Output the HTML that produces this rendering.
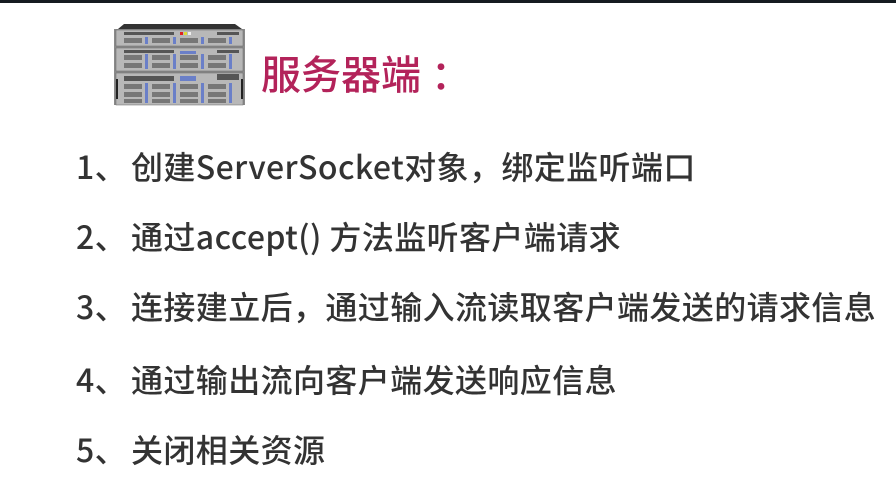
<!DOCTYPE html>
<html><head><meta charset="utf-8"><style>
body{margin:0;width:896px;height:490px;background:#fff;position:relative;overflow:hidden;font-family:"Liberation Sans","Noto Sans CJK SC",sans-serif}
.bar{position:absolute;left:0;top:0;width:896px;height:3px;background:#151b20}
.t{position:absolute;left:261px;top:46px;font-size:40px;color:#b3235a;font-family:"Noto Sans CJK SC",sans-serif;font-weight:500;line-height:52px;white-space:nowrap}
.l{position:absolute;left:76px;font-size:32px;color:#333;line-height:40px;white-space:nowrap;font-family:"Noto Sans CJK SC",sans-serif;font-weight:500;letter-spacing:0.4px}
.l span{display:inline-block;width:55px}
</style></head><body>
<div class="bar"></div>
<svg style="position:absolute;left:112px;top:24px" width="135" height="86" viewBox="0 0 135 86">
<polygon points="12,0 123,0 130,5 6,5" fill="#333"/>
<rect x="2" y="5" width="131" height="76" fill="#8a8a8a"/>
<g fill="#b8b8b8" stroke="#666" stroke-width="0.5">
<rect x="4" y="6" width="127" height="16"/><rect x="4" y="24" width="127" height="23"/><rect x="4" y="49" width="127" height="32"/></g>
<g fill="#555"><rect x="12" y="8" width="50" height="3"/><rect x="105" y="8" width="22" height="3"/>
<rect x="12" y="26" width="50" height="3"/><rect x="105" y="26" width="22" height="3"/>
<rect x="12" y="52" width="50" height="5"/><rect x="105" y="50" width="22" height="6"/></g>
<g fill="#777">
<rect x="12" y="14" width="18" height="5"/><rect x="40" y="14" width="18" height="5"/><rect x="68" y="14" width="18" height="5"/><rect x="96" y="14" width="18" height="5"/>
<rect x="12" y="31" width="18" height="5"/><rect x="40" y="31" width="18" height="5"/><rect x="68" y="31" width="18" height="5"/><rect x="96" y="31" width="18" height="5"/>
<rect x="12" y="39" width="18" height="5"/><rect x="40" y="39" width="18" height="5"/><rect x="68" y="39" width="18" height="5"/><rect x="96" y="39" width="18" height="5"/>
<rect x="12" y="60" width="18" height="5"/><rect x="40" y="60" width="18" height="5"/><rect x="68" y="60" width="18" height="5"/><rect x="96" y="60" width="18" height="5"/>
<rect x="12" y="68" width="18" height="5"/><rect x="40" y="68" width="18" height="5"/><rect x="68" y="68" width="18" height="5"/><rect x="96" y="68" width="18" height="5"/>
<rect x="12" y="75" width="18" height="4"/><rect x="40" y="75" width="18" height="4"/><rect x="68" y="75" width="18" height="4"/><rect x="96" y="75" width="18" height="4"/></g>
<g fill="#6a7fc8"><rect x="33" y="13" width="3" height="7"/><rect x="61" y="13" width="3" height="7"/><rect x="89" y="13" width="3" height="7"/><rect x="117" y="13" width="3" height="7"/>
<rect x="33" y="30" width="3" height="15"/><rect x="61" y="30" width="3" height="15"/><rect x="89" y="30" width="3" height="15"/><rect x="117" y="30" width="3" height="15"/>
<rect x="33" y="59" width="3" height="20"/><rect x="61" y="59" width="3" height="20"/><rect x="89" y="59" width="3" height="20"/><rect x="117" y="59" width="3" height="20"/>
<rect x="68" y="27" width="16" height="3"/><rect x="68" y="52" width="16" height="5"/></g>
<rect x="68" y="8" width="3" height="3" fill="#d22"/><rect x="72" y="8" width="3" height="3" fill="#dd3"/><rect x="76" y="8" width="3" height="3" fill="#eee"/>
<g fill="#222"><rect x="4" y="55" width="2" height="20"/><rect x="129" y="55" width="2" height="20"/></g>
</svg>
<div class="t">服务器端<span style="margin-left:10px">：</span></div>
<div class="l" style="top:146px"><span>1、</span>创建ServerSocket对象，绑定监听端口</div>
<div class="l" style="top:216px"><span>2、</span>通过accept() 方法监听客户端请求</div>
<div class="l" style="top:286px"><span>3、</span>连接建立后，通过输入流读取客户端发送的请求信息</div>
<div class="l" style="top:359px"><span>4、</span>通过输出流向客户端发送响应信息</div>
<div class="l" style="top:429px"><span>5、</span>关闭相关资源</div>
</body></html>
